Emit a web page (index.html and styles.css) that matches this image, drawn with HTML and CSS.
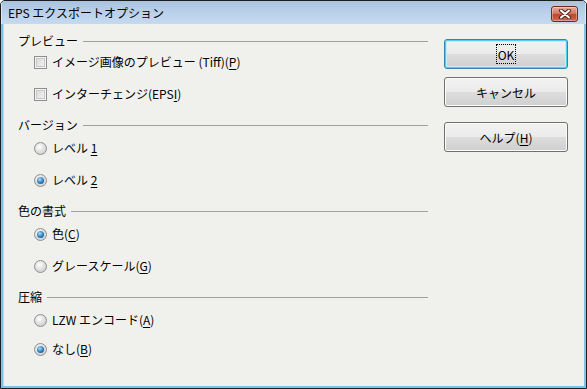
FILE: index.html
```html
<!DOCTYPE html>
<html lang="ja">
<head>
    <meta charset="UTF-8">
    <title>EPS エクスポートオプション</title>
    <link rel="stylesheet" href="styles.css">
</head>
<body>
    <div class="window">
        <div class="titlebar">
            <span class="title">EPS エクスポートオプション</span>
            <button class="close" aria-label="閉じる">
                <svg width="14" height="10" viewBox="0 0 14 10">
                    <path d="M3 1.5 L11 8.5 M11 1.5 L3 8.5" stroke="#4a2a24" stroke-width="4" stroke-linecap="round"/>
                    <path d="M3 1.5 L11 8.5 M11 1.5 L3 8.5" stroke="#ffffff" stroke-width="2" stroke-linecap="round"/>
                </svg>
            </button>
        </div>

        <div class="client">
            <div class="settings">
                <section class="group first">
                    <div class="group-head">プレビュー</div>
                    <div class="group-body">
                        <label class="option"><span class="check"></span><span>イメージ画像のプレビュー (Tiff)(<u>P</u>)</span></label>
                        <label class="option"><span class="check"></span><span>インターチェンジ(EPS<u>I</u>)</span></label>
                    </div>
                </section>

                <section class="group">
                    <div class="group-head">バージョン</div>
                    <div class="group-body">
                        <label class="option"><span class="radio"></span><span>レベル <u>1</u></span></label>
                        <label class="option"><span class="radio on"></span><span>レベル <u>2</u></span></label>
                    </div>
                </section>

                <section class="group">
                    <div class="group-head">色の書式</div>
                    <div class="group-body">
                        <label class="option"><span class="radio on"></span><span>色(<u>C</u>)</span></label>
                        <label class="option"><span class="radio"></span><span>グレースケール(<u>G</u>)</span></label>
                    </div>
                </section>

                <section class="group">
                    <div class="group-head">圧縮</div>
                    <div class="group-body tight">
                        <label class="option"><span class="radio"></span><span>LZW エンコード(<u>A</u>)</span></label>
                        <label class="option"><span class="radio on"></span><span>なし(<u>B</u>)</span></label>
                    </div>
                </section>
            </div>

            <div class="actions">
                <button class="btn default"><span class="focus">OK</span></button>
                <button class="btn">キャンセル</button>
                <button class="btn help"><span>ヘルプ(<u>H</u>)</span></button>
            </div>
        </div>
    </div>
</body>
</html>
```

FILE: styles.css
```css
* {
    margin: 0;
    padding: 0;
    box-sizing: border-box;
}

body {
    width: 587px;
    height: 389px;
    font-family: "Noto Sans CJK JP", "Noto Sans", sans-serif;
    font-size: 12px;
    color: #000;
    background: #ffffff;
}

.window {
    width: 587px;
    height: 389px;
    display: flex;
    flex-direction: column;
    border: 1px solid #1e1e1e;
    border-radius: 5px 5px 0 0;
    background: #7fc4e6;
    overflow: hidden;
}

/* タイトルバー */
.titlebar {
    height: 23px;
    display: flex;
    align-items: center;
    justify-content: space-between;
    padding: 0 7px 0 6px;
    background: linear-gradient(#a9c3df, #bcd3ec 60%, #c5daef);
    border-left: 1px solid #dce8f5;
    border-right: 1px solid #dce8f5;
}

.title {
    line-height: 18px;
    margin-top: 1px;
}

.close {
    width: 27px;
    height: 16px;
    margin-top: 2px;
    display: flex;
    align-items: center;
    justify-content: center;
    border: 1px solid #6e2a1f;
    border-radius: 3px;
    background: linear-gradient(#e8aa9c, #d27a64 45%, #c0452c 55%, #d0694f);
    box-shadow: inset 0 0 0 1px rgba(255, 255, 255, 0.35);
}

/* 本体 */
.client {
    flex: 1;
    display: flex;
    gap: 16px;
    margin: 0 2px 2px 2px;
    padding: 8px 16px 0 14px;
    background: #f0f0ed;
    border-left: 1px solid #b8d8ee;
}

.settings {
    width: 410px;
    display: flex;
    flex-direction: column;
    gap: 13px;
}

.group-head {
    height: 18px;
    line-height: 18px;
    display: flex;
    align-items: center;
    gap: 5px;
}

.group-head::after {
    content: "";
    flex: 1;
    height: 1px;
    background: #a0a0a0;
    margin-top: 1px;
}

.group-body {
    display: flex;
    flex-direction: column;
    gap: 14px;
    padding: 5px 0 0 16px;
}

.group.first .group-body {
    padding-top: 3px;
}

.group-body.tight {
    gap: 11px;
}

.option {
    height: 18px;
    line-height: 18px;
    display: flex;
    align-items: center;
    gap: 5px;
}

u {
    text-decoration: underline;
    text-underline-offset: 2px;
}

.check {
    width: 13px;
    height: 13px;
    border: 1px solid #8e8f8f;
    background: linear-gradient(135deg, #d6d6d6, #f6f6f6);
    box-shadow: inset 0 0 0 1px #f4f4f4, inset 0 0 0 2px #c8c8c8;
}

.radio {
    width: 13px;
    height: 13px;
    border-radius: 50%;
    border: 1px solid #8e8f8f;
    background: radial-gradient(circle at 40% 35%, #ffffff, #e2e2e2 45%, #c4c4c4);
    position: relative;
}

.radio.on::after {
    content: "";
    position: absolute;
    left: 2px;
    top: 2px;
    width: 7px;
    height: 7px;
    border-radius: 50%;
    background: radial-gradient(circle at 40% 35%, #a9e1fb, #2a7cc0 55%, #0e3f78);
}

/* ボタン */
.actions {
    width: 124px;
    display: flex;
    flex-direction: column;
    gap: 8px;
    padding-top: 7px;
}

.btn {
    height: 30px;
    font-family: inherit;
    font-size: 12px;
    color: #000;
    border: 1px solid #707070;
    border-radius: 3px;
    background: linear-gradient(#f2f2f2, #ebebeb 50%, #dddddd 51%, #cfcfcf);
    box-shadow: inset 0 0 0 1px #fcfcfc;
    display: flex;
    align-items: center;
    justify-content: center;
}

.btn.default {
    border-color: #3c7fb1;
    box-shadow: inset 0 0 0 1px #48d1f6, inset 0 0 0 2px #c8ecfa;
}

.btn.help {
    margin-top: 7px;
}

.focus {
    display: inline-flex;
    align-items: center;
    justify-content: center;
    width: 20px;
    height: 20px;
    border: 1px dotted #000;
}
```
